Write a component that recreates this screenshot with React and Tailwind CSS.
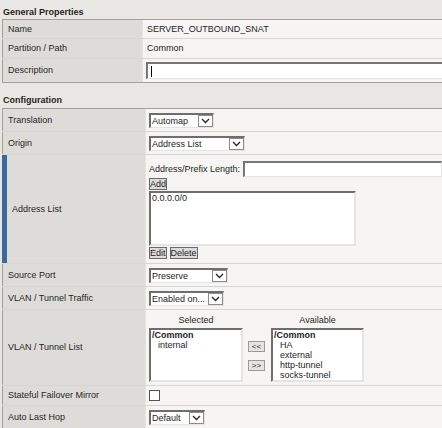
import React from "react";

function Chevron() {
  return (
    <svg width="9" height="6" viewBox="0 0 9 6">
      <path d="M1 1 L4.5 4.5 L8 1" fill="none" stroke="#2a2a2a" strokeWidth="1.4" />
    </svg>
  );
}

function Select({ w, text }) {
  return (
    <div className={`flex h-[15px] ${w} border-t-2 border-l-2 border-b border-r border-t-[#6e6e6e] border-l-[#6e6e6e] border-b-[#e4e4e4] border-r-[#e4e4e4] bg-white`}>
      <span className="flex-1 pl-[1px] leading-[12px] whitespace-nowrap overflow-hidden">{text}</span>
      <span className="flex h-[12px] w-[15px] items-center justify-center border border-[#8c8c8c] bg-white">
        <Chevron />
      </span>
    </div>
  );
}

function Btn({ children }) {
  return (
    <span className="inline-flex h-[12px] items-center border border-[#6a6a6a] bg-[#dcdcdc] px-0 leading-[10px]">
      {children}
    </span>
  );
}

function Label1({ children }) {
  return (
    <div className="flex h-full w-[141px] shrink-0 items-center border-l border-r border-l-[#a2a09c] border-r-[#e6e4e0] bg-[#dedcd8] pl-[5px]">
      {children}
    </div>
  );
}

function Label2({ children }) {
  return (
    <div className="flex h-full w-[144px] shrink-0 items-center border-l border-r border-l-[#a2a09c] border-r-[#e6e4e0] bg-[#dedcd8] pl-[5px]">
      {children}
    </div>
  );
}

export default function App() {
  return (
    <div className="h-[428px] w-[442px] overflow-hidden bg-[#e9e7e3] font-['Liberation_Sans',Arial,sans-serif] text-[9px] leading-[11px] text-[#1e1e1e]">
      {/* General Properties */}
      <div className="flex h-[19px] items-end pb-[1px] pl-[3px] font-bold">General Properties</div>
      <div className="ml-[2px] w-[460px] border-t border-b border-[#a2a09c]">
        <div className="flex h-[19px] border-b border-[#d8d6d2]">
          <Label1>Name</Label1>
          <div className="flex flex-1 items-center bg-[#f6f5f3] pl-[4px]">SERVER_OUTBOUND_SNAT</div>
        </div>
        <div className="flex h-[20px] border-b border-[#d8d6d2]">
          <Label1>Partition / Path</Label1>
          <div className="flex flex-1 items-center bg-[#f6f5f3] pl-[4px]">Common</div>
        </div>
        <div className="flex h-[23px]">
          <Label1>Description</Label1>
          <div className="flex flex-1 items-center bg-[#f6f5f3] pl-[3px]">
            <div className="flex h-[17px] w-[320px] items-center border-t-2 border-l-2 border-b border-t-[#777] border-l-[#777] border-b-[#e4e4e4] bg-white">
              <span className="ml-[3px] h-[11px] w-[1px] bg-black" />
            </div>
          </div>
        </div>
      </div>

      {/* Configuration */}
      <div className="flex h-[25px] items-end pb-[2px] pl-[3px] font-bold">Configuration</div>
      <div className="ml-[2px] w-[460px] border-t border-[#a2a09c]">
        <div className="flex h-[23px] border-b border-[#d8d6d2]">
          <Label2>Translation</Label2>
          <div className="flex flex-1 items-center bg-[#f6f5f3] pl-[3px]">
            <Select w="w-[65px]" text="Automap" />
          </div>
        </div>
        <div className="flex h-[23px] border-b border-[#d8d6d2]">
          <Label2>Origin</Label2>
          <div className="flex flex-1 items-center bg-[#f6f5f3] pl-[3px]">
            <Select w="w-[96px]" text="Address List" />
          </div>
        </div>
        <div className="flex h-[109px] border-b border-[#d8d6d2]">
          <div className="flex h-full w-[144px] shrink-0 items-center border-l-[5px] border-r border-l-[#3a6b9f] border-r-[#e6e4e0] bg-[#dedcd8] pl-[5px]">
            Address List
          </div>
          <div className="flex flex-1 flex-col items-start bg-[#f6f5f3] pl-[3px] pt-[6px]">
            <div className="flex h-[16px] items-center gap-[3px]">
              <span>Address/Prefix Length:</span>
              <span className="h-[16px] w-[199px] border-t-2 border-l-2 border-b border-r border-t-[#777] border-l-[#777] border-b-[#e4e4e4] border-r-[#e4e4e4] bg-white" />
            </div>
            <div className="mt-[1px]">
              <Btn>Add</Btn>
            </div>
            <div className="mt-[1px] h-[55px] w-[207px] border-t-2 border-l-2 border-b-2 border-r-2 border-t-[#6e6e6e] border-l-[#6e6e6e] border-b-[#e4e4e4] border-r-[#e4e4e4] bg-white pl-[1px] leading-[10px]">
              0.0.0.0/0
            </div>
            <div className="mt-[1px] flex gap-[3px]">
              <Btn>Edit</Btn>
              <Btn>Delete</Btn>
            </div>
          </div>
        </div>
        <div className="flex h-[23px] border-b border-[#d8d6d2]">
          <Label2>Source Port</Label2>
          <div className="flex flex-1 items-center bg-[#f6f5f3] pl-[3px]">
            <Select w="w-[79px]" text="Preserve" />
          </div>
        </div>
        <div className="flex h-[23px] border-b border-[#d8d6d2]">
          <Label2>VLAN / Tunnel Traffic</Label2>
          <div className="flex flex-1 items-center bg-[#f6f5f3] pl-[3px]">
            <Select w="w-[75px]" text="Enabled on..." />
          </div>
        </div>
        <div className="flex h-[76px] border-b border-[#d8d6d2]">
          <Label2>VLAN / Tunnel List</Label2>
          <div className="flex flex-1 items-start bg-[#f6f5f3] pl-[3px] pt-[5px]">
            <div className="flex w-[94px] flex-col">
              <div className="h-[11px] text-center">Selected</div>
              <div className="mt-[2px] h-[54px] border-2 border-t-[#6e6e6e] border-l-[#6e6e6e] border-b-[#e4e4e4] border-r-[#e4e4e4] bg-white pl-[1px] leading-[10px]">
                <div className="font-bold">/Common</div>
                <div className="pl-[6px]">internal</div>
              </div>
            </div>
            <div className="ml-[5px] mt-[26px] flex flex-col gap-[8px]">
              <span className="flex h-[11px] w-[17px] items-center justify-center border border-[#9a9a9a] bg-[#e4e4e4] text-[8px] leading-[8px]">&lt;&lt;</span>
              <span className="flex h-[11px] w-[17px] items-center justify-center border border-[#9a9a9a] bg-[#e4e4e4] text-[8px] leading-[8px]">&gt;&gt;</span>
            </div>
            <div className="ml-[6px] flex w-[93px] flex-col">
              <div className="h-[11px] text-center">Available</div>
              <div className="mt-[2px] h-[54px] overflow-hidden border-2 border-t-[#6e6e6e] border-l-[#6e6e6e] border-b-[#e4e4e4] border-r-[#e4e4e4] bg-white pl-[1px] leading-[10px]">
                <div className="font-bold">/Common</div>
                <div className="pl-[6px]">HA</div>
                <div className="pl-[6px]">external</div>
                <div className="pl-[6px]">http-tunnel</div>
                <div className="pl-[6px]">socks-tunnel</div>
              </div>
            </div>
          </div>
        </div>
        <div className="flex h-[20px] border-b border-[#d8d6d2]">
          <Label2>Stateful Failover Mirror</Label2>
          <div className="flex flex-1 items-center bg-[#f6f5f3] pl-[3px]">
            <span className="h-[11px] w-[11px] border border-[#555] bg-white" />
          </div>
        </div>
        <div className="flex h-[23px]">
          <Label2>Auto Last Hop</Label2>
          <div className="flex flex-1 items-center bg-[#f6f5f3] pl-[3px]">
            <Select w="w-[56px]" text="Default" />
          </div>
        </div>
      </div>
    </div>
  );
}
